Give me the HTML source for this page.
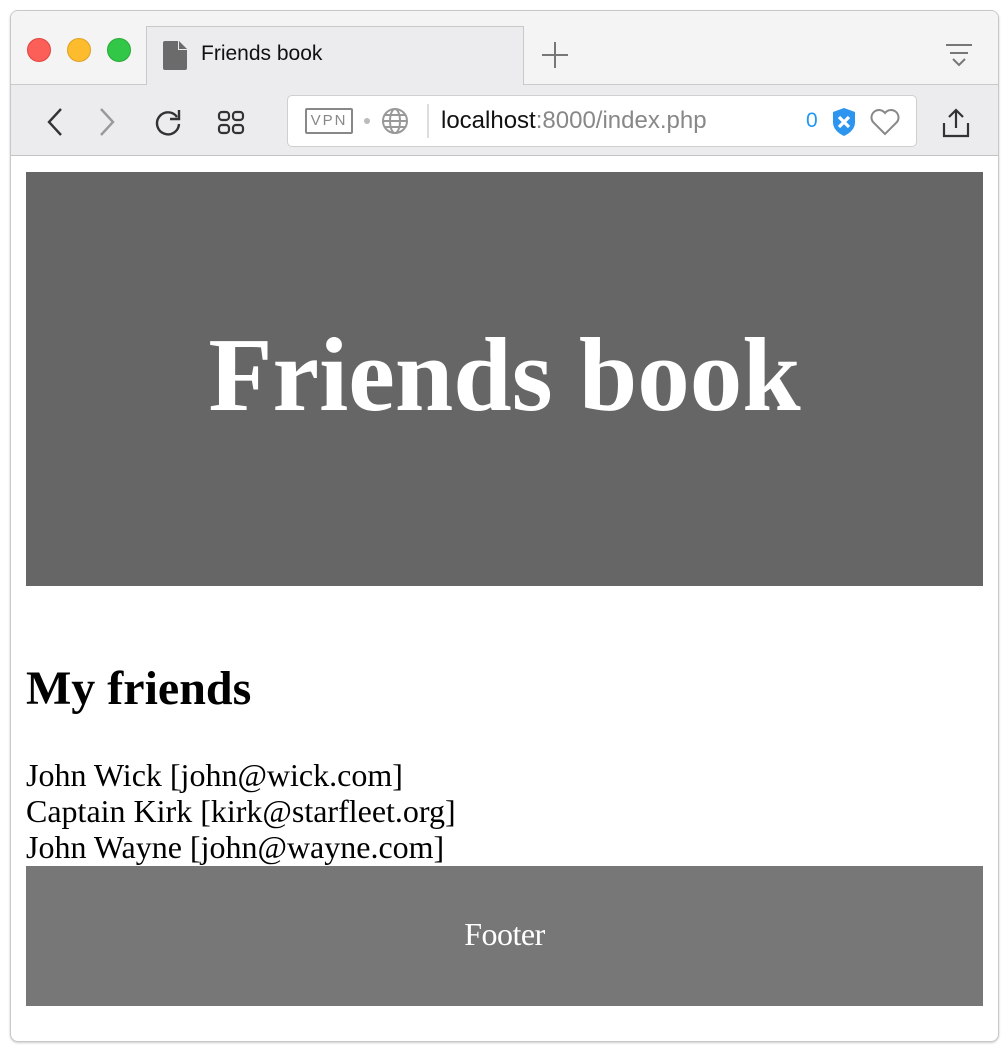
<!DOCTYPE html>
<html><head><meta charset="utf-8"><style>
*{margin:0;padding:0;box-sizing:border-box}
body{width:1008px;height:1050px;background:#fff;position:relative;overflow:hidden;font-family:"Liberation Sans",sans-serif}
.win{position:absolute;left:10px;top:10px;width:989px;height:1032px;border:1px solid #c8c8c8;border-radius:8px;background:#fff;overflow:hidden;box-shadow:0 1px 2px rgba(0,0,0,.2)}
.tabbar{position:absolute;left:0;top:0;width:100%;height:74px;background:#f4f4f5;border-bottom:1px solid #c9c9c9}
.tab{position:absolute;left:135px;top:15px;width:378px;height:60px;background:#ececee;border:1px solid #c9c9c9;border-bottom:none}
.toolbar{position:absolute;left:0;top:74px;width:100%;height:71px;background:#ececee;border-bottom:1px solid #c3c3c3}
.dot{position:absolute;top:27px;width:24px;height:24px;border-radius:50%}
.url{position:absolute;left:276px;top:10px;width:630px;height:52px;background:#fff;border:1px solid #cfcfcf;border-radius:5px}
.abs{position:absolute}
.serif{font-family:"Liberation Serif",serif;position:absolute;white-space:nowrap}
</style></head><body>
<div class="win">
 <div class="tabbar">
  <div class="dot" style="left:16px;background:#fc5f57;border:1px solid #e0443e"></div>
  <div class="dot" style="left:56px;background:#fdbc2e;border:1px solid #dea123"></div>
  <div class="dot" style="left:96px;background:#33c748;border:1px solid #27aa35"></div>
  <div class="tab">
   <svg class="abs" style="left:16px;top:14px" width="24" height="29" viewBox="0 0 24 29"><path d="M2 0h13l9 9v18a2 2 0 0 1-2 2H2a2 2 0 0 1-2-2V2a2 2 0 0 1 2-2z" fill="#6b6b6b"/><path d="M15 0v9h9" fill="#ececee"/><path d="M16 0l8 8h-8z" fill="#6b6b6b"/></svg>
   <div class="abs" style="left:54px;top:15px;font-size:21px;color:#111">Friends book</div>
  </div>
  <svg class="abs" style="left:530px;top:30px" width="28" height="28"><path d="M14 1v26M1 14h26" stroke="#777" stroke-width="2"/></svg>
  <svg class="abs" style="left:934px;top:32px" width="28" height="24"><path d="M1 2h26M5 10h18M8 16l6 6 6-6" stroke="#777" stroke-width="2" fill="none"/></svg>
 </div>
 <div class="toolbar">
  <svg class="abs" style="left:34px;top:22px" width="20" height="30"><path d="M16 2L4 15l12 13" stroke="#333" stroke-width="2.4" fill="none"/></svg>
  <svg class="abs" style="left:86px;top:22px" width="20" height="30"><path d="M4 2l12 13-12 13" stroke="#999" stroke-width="2.4" fill="none"/></svg>
  <svg class="abs" style="left:142px;top:22px" width="30" height="30"><path d="M24 10A11 11 0 1 0 26 17" stroke="#333" stroke-width="2.4" fill="none"/><path d="M26 3v9h-9" fill="none" stroke="#333" stroke-width="2.4"/></svg>
  <svg class="abs" style="left:206px;top:25px" width="28" height="26"><g fill="none" stroke="#333" stroke-width="2.2"><rect x="2" y="2" width="10" height="8" rx="3"/><rect x="16" y="2" width="10" height="8" rx="3"/><rect x="2" y="15" width="10" height="8" rx="3"/><rect x="16" y="15" width="10" height="8" rx="3"/></g></svg>
  <div class="url">
   <div class="abs" style="left:17px;top:12px;width:48px;height:26px;border:2px solid #888;border-radius:2px;color:#888;font-size:15px;letter-spacing:2px;text-align:center;line-height:22px">VPN</div>
   <div class="abs" style="left:76px;top:22px;width:6px;height:6px;border-radius:50%;background:#bbb"></div>
   <svg class="abs" style="left:93px;top:11px" width="28" height="28"><g fill="none" stroke="#999" stroke-width="2"><circle cx="14" cy="14" r="12"/><ellipse cx="14" cy="14" rx="5" ry="12"/><path d="M2 14h24M4 8h20M4 20h20"/></g></svg>
   <div class="abs" style="left:139px;top:8px;width:2px;height:34px;background:#ddd"></div>
   <div class="abs" style="left:153px;top:11px;font-size:24px;color:#111">localhost<span style="color:#888">:8000/index.php</span></div>
   <div class="abs" style="left:518px;top:13px;font-size:21px;color:#2196f3">0</div>
   <svg class="abs" style="left:543px;top:11px" width="26" height="30"><path d="M13 1l11 4v10c0 7-5 11-11 14C7 26 2 22 2 15V5z" fill="#2b95f0"/><path d="M8 10l10 10M18 10L8 20" stroke="#fff" stroke-width="3.2"/></svg>
   <svg class="abs" style="left:581px;top:12px" width="32" height="28"><path d="M16 26L4 14A7 7 0 0 1 16 5a7 7 0 0 1 12 9z" fill="none" stroke="#888" stroke-width="2"/></svg>
  </div>
  <svg class="abs" style="left:930px;top:22px" width="30" height="32"><g fill="none" stroke="#333" stroke-width="2.2"><path d="M15 21V3M8 10l7-7 7 7M3 16v13h24V16"/></g></svg>
 </div>
 <div class="abs" style="left:15px;top:161px;width:957px;height:414px;background:#666"></div>
 <div class="serif" style="left:0;width:987px;text-align:center;top:304px;font-size:105px;line-height:120px;font-weight:bold;color:#fff">Friends book</div>
 <div class="serif" style="left:15px;top:650px;font-size:48px;line-height:56px;font-weight:bold;color:#000">My friends</div>
 <div class="serif" style="left:15px;top:746px;font-size:32px;line-height:36px;color:#000">John Wick [john@wick.com]<br>Captain Kirk [kirk@starfleet.org]<br>John Wayne [john@wayne.com]</div>
 <div class="abs" style="left:15px;top:855px;width:957px;height:140px;background:#777"></div>
 <div class="serif" style="left:15px;width:957px;text-align:center;top:905px;font-size:32px;line-height:36px;color:#fff;letter-spacing:-0.5px">Footer</div>
</div>
</body></html>
